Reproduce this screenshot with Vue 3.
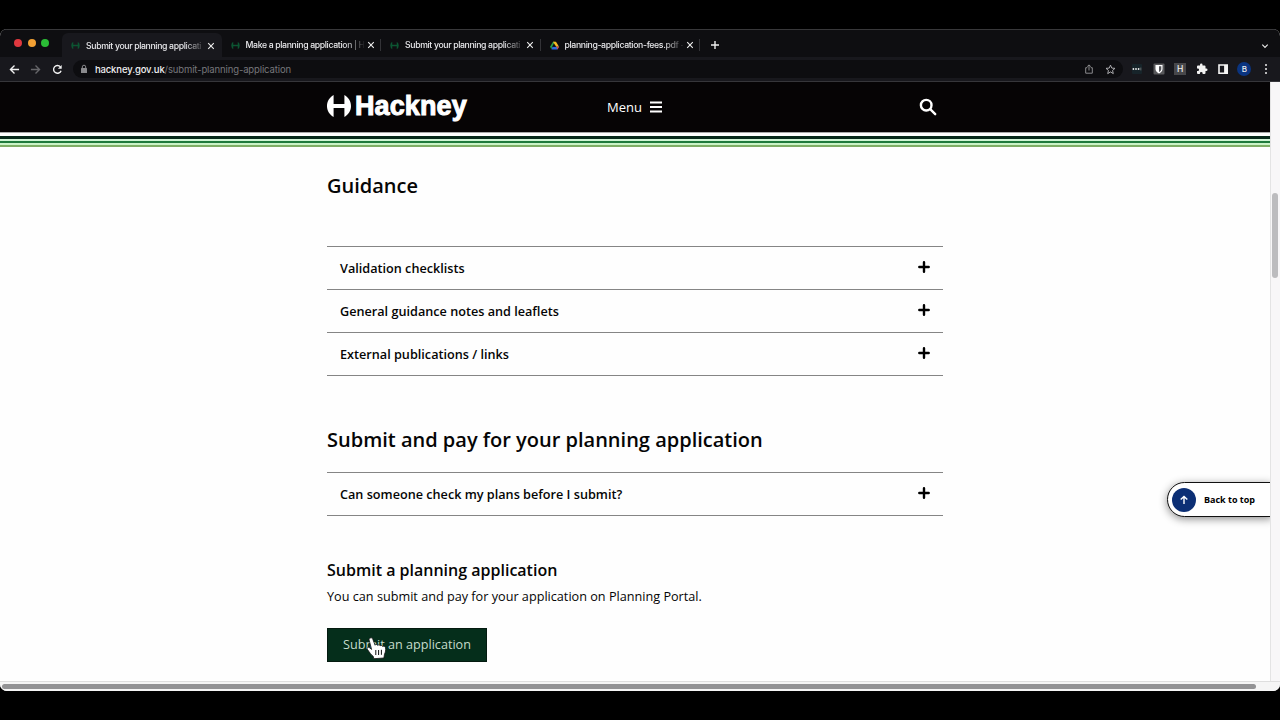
<script setup>
const tabs = [
  { title: "Submit your planning applicati", icon: "hackney", active: true },
  { title: "Make a planning application | H", icon: "hackney" },
  { title: "Submit your planning applicati", icon: "hackney" },
  { title: "planning-application-fees.pdf -", icon: "drive" },
];

const guidance = [
  "Validation checklists",
  "General guidance notes and leaflets",
  "External publications / links",
];

const submit = ["Can someone check my plans before I submit?"];
</script>

<template>
  <div class="desktop">
    <div class="window">
      <div class="tabbar">
        <div class="lights">
          <i class="red"></i>
          <i class="amber"></i>
          <i class="green"></i>
        </div>
        <div v-for="(tab, i) in tabs" :key="i" class="tab" :class="{ active: tab.active }">
          <svg v-if="tab.icon === 'hackney'" class="favicon" viewBox="0 0 24 24">
            <path fill="#0c5532" d="M6 2v8h12V2a12 12 0 0 1 0 20v-8H6v8A12 12 0 0 1 6 2z" />
          </svg>
          <svg v-else class="favicon drive" viewBox="0 0 24 22">
            <path fill="#2a9d4b" d="M8 1h5L5.500 14 4 21 0 14.500z" />
            <path fill="#f5b923" d="M8 1h8l8 13.500h-8z" />
            <path fill="#2c6be0" d="M6.500 14.500H24L20 21.500H4z" />
            <path fill="#e5483a" d="M17 14.500h7L20 21.500z" />
            <path fill="#0e0e11" d="M12 8l4 6.500H8z" />
          </svg>
          <span class="title">{{ tab.title }}</span>
          <svg class="close" viewBox="0 0 8 8"><path d="M1.200 1.200l5.600 5.600M6.800 1.200L1.200 6.800" /></svg>
        </div>
        <svg class="newtab" viewBox="0 0 10 10"><path d="M5 1v8M1 5h8" /></svg>
        <svg class="chevron" viewBox="0 0 8 8"><path d="M1.300 2.700L4 5.400l2.700-2.700" /></svg>
      </div>

      <div class="toolbar">
        <svg class="nav" viewBox="0 0 12 12"><path d="M11 6H1.800M6 1.600L1.600 6 6 10.400" /></svg>
        <svg class="nav dim" viewBox="0 0 12 12"><path d="M1 6h9.200M6 1.600L10.400 6 6 10.400" /></svg>
        <svg class="nav" viewBox="0 0 12 12">
          <path d="M9.900 7.300A4.200 4.200 0 1 1 9.200 3.200" />
          <path class="solid" d="M10.600 1v4.200H6.400z" />
        </svg>
        <div class="omnibox">
          <svg class="lock" viewBox="0 0 8 10">
            <rect x="1" y="4" width="6" height="5" rx=".6" fill="#8a8a8d" />
            <path d="M2.300 4.200V2.900a1.700 1.700 0 0 1 3.400 0v1.300" fill="none" stroke="#8a8a8d" />
          </svg>
          <span class="url"><b>hackney.gov.uk</b>/submit-planning-application</span>
          <svg class="share" viewBox="0 0 10 10"><path d="M3.300 3.700H1.700v5.500h6.600V3.700H6.700M5 6.500V1M3.200 2.600L5 .9l1.800 1.700" /></svg>
          <svg class="star" viewBox="0 0 24 24"><path d="M12 2.500l2.800 6.400 7 .6-5.300 4.600 1.600 6.900-6.100-3.700L5.900 21l1.600-6.900-5.300-4.600 7-.6z" /></svg>
        </div>
        <div class="extensions">
          <svg viewBox="0 0 12 12">
            <rect x="1" y="1" width="10" height="10" rx="1" fill="#17242a" />
            <circle cx="2.400" cy="6" r=".9" fill="#eee" /><circle cx="5" cy="6" r=".9" fill="#eee" />
            <circle cx="7.600" cy="6" r=".9" fill="#eee" /><path d="M9.800 4.600v2.800" stroke="#888" stroke-width=".7" />
          </svg>
          <svg viewBox="0 0 12 12">
            <rect x=".5" y=".5" width="11" height="11" rx="1" fill="#58585b" />
            <path d="M2.500 2h7v4c0 2.300-1.800 3.600-3.500 4.400C4.300 9.600 2.500 8.300 2.500 6z" fill="#fff" />
            <path d="M6 3.200h2.300V6c0 1.300-1 2.200-2.300 3z" fill="#55555a" />
          </svg>
          <span class="letter">H</span>
          <svg viewBox="0 0 24 24">
            <path fill="#f2f2f2" d="M20.500 11H19V7a2 2 0 0 0-2-2h-4V3.500a2.500 2.500 0 0 0-5 0V5H4a2 2 0 0 0-2 2v3.800h1.500a2.700 2.700 0 0 1 0 5.400H2V20a2 2 0 0 0 2 2h3.800v-1.500a2.700 2.700 0 0 1 5.400 0V22H17a2 2 0 0 0 2-2v-4h1.500a2.500 2.500 0 0 0 0-5z" />
          </svg>
          <svg viewBox="0 0 12 12">
            <path fill="#f5f5f5" fill-rule="evenodd" d="M1.200 1.200h9.800v9.800H1.200zM2.800 2.800v6.600h4.300V2.800z" />
          </svg>
          <span class="avatar">B</span>
          <svg class="kebab" viewBox="0 0 12 12"><circle cx="6" cy="2" r="1" /><circle cx="6" cy="6" r="1" /><circle cx="6" cy="10" r="1" /></svg>
        </div>
      </div>

      <div class="viewport">
        <div class="page">
          <header class="header">
            <div class="inner">
              <div class="logo">
                <svg viewBox="0 0 24 22">
                  <path fill="#fff" d="M6.600 0V9H17.400V0C21.800 2.500 24 6.500 24 11s-2.200 8.500-6.600 11V13H6.600v9C2.200 19.500 0 15.500 0 11S2.200 2.500 6.600 0z" />
                </svg>
                <span>Hackney</span>
              </div>
              <div class="menu">
                <span>Menu</span>
                <svg viewBox="0 0 12 12"><path d="M0 1.500h12M0 6h12M0 10.500h12" /></svg>
              </div>
              <svg class="search" viewBox="0 0 18 18">
                <circle cx="7.200" cy="7.200" r="5.300" />
                <path d="M11.200 11.200l5 5" />
              </svg>
            </div>
          </header>
          <div class="stripes"><i></i><i></i><i></i></div>

          <main class="content">
            <h2 class="guidance">Guidance</h2>
            <ul class="accordion">
              <li v-for="item in guidance" :key="item">
                <span>{{ item }}</span>
                <svg viewBox="0 0 12 12"><path d="M6 1.300v9.400M1.300 6h9.400" /></svg>
              </li>
            </ul>
            <h2 class="pay">Submit and pay for your planning application</h2>
            <ul class="accordion">
              <li v-for="item in submit" :key="item">
                <span>{{ item }}</span>
                <svg viewBox="0 0 12 12"><path d="M6 1.300v9.400M1.300 6h9.400" /></svg>
              </li>
            </ul>
            <h3>Submit a planning application</h3>
            <p>You can submit and pay for your application on Planning Portal.</p>
            <a class="button">Submit an application</a>
          </main>

          <div class="totop">
            <span class="disc">
              <svg viewBox="0 0 10 10"><path d="M5 9V1.600M1.700 4.600L5 1.400l3.300 3.200" /></svg>
            </span>
            <span>Back to top</span>
          </div>
        </div>
        <div class="vscroll"><div class="thumb"></div></div>
      </div>
      <div class="hscroll"><div class="thumb"></div></div>
    </div>

    <svg class="cursor" viewBox="0 0 20 22">
      <path
        fill="#fff"
        stroke="#111"
        stroke-width=".8"
        d="M4.400 1c1.200-.5 2 .2 2.400 1.200l2.300 6c.3-1 2.200-1 2.600.2.600-.9 2.200-.7 2.500.4.700-.7 2-.4 2.300.6 1.200-.4 2.800.1 3 1.300.4 2.300 0 4.500-1 6.500l-.6 3.800-10 .7-.7-2.400c-2-1.300-3.300-3.500-5.700-6.800-1.200-1.800.8-2.800 2.100-1.700l2 1.600L3.200 3.200C2.800 2.200 3.300 1.300 4.400 1z"
      />
      <path d="M9.800 13v5M12.600 13v5M15.400 12.800v5" stroke="#111" stroke-width="1" fill="none" />
    </svg>
  </div>
</template>

<style>
body {
  margin: 0;
  background: #000;
}
</style>

<style scoped>
.desktop {
  position: relative;
  box-sizing: border-box;
  width: 1280px;
  height: 720px;
  padding: 29px 0;
  overflow: hidden;
  background: #000;
  font-family: "Open Sans", sans-serif;
}

svg {
  flex: none;
  display: block;
}

.window {
  display: flex;
  flex-direction: column;
  height: 662px;
  overflow: hidden;
  border-radius: 7px;
  background: #fff;
}

.tabbar {
  display: flex;
  box-sizing: border-box;
  height: 28px;
  border-top: 1px solid #38383a;
  background: #0e0e11;
  font: 500 8.700px Inter, sans-serif;
  letter-spacing: -0.350px;
  color: #e9e9ec;
}

.lights {
  display: flex;
  gap: 5.500px;
  width: 48px;
  padding: 9px 0 0 14px;
}

.lights i {
  width: 8px;
  height: 8px;
  border-radius: 50%;
}

.red {
  background: #e0383e;
}

.amber {
  background: #f2a033;
}

.green {
  background: #2bbd36;
}

.tab {
  display: flex;
  align-items: center;
  box-sizing: border-box;
  width: 159.500px;
  height: 24px;
  margin-top: 3px;
  padding: 0 6.500px 0 9px;
}

.tab.active {
  height: 25px;
  border-radius: 6px 6px 0 0;
  background: #18181d;
}

.tab:not(.active) {
  background: linear-gradient(#333337, #333337) no-repeat right 6px / 1px 12px;
}

.favicon {
  width: 9px;
  height: 9px;
}

.title {
  flex: 1;
  min-width: 0;
  margin-left: 6px;
  white-space: nowrap;
  mask-image: linear-gradient(90deg, #000 98px, transparent 120px);
}

.close {
  width: 8px;
  height: 8px;
  margin-left: 3px;
}

.close path,
.newtab path,
.chevron path {
  fill: none;
  stroke: #eee;
  stroke-width: 1.100;
}

.newtab {
  width: 10px;
  height: 10px;
  margin: 10px 0 0 9.500px;
}

.newtab path {
  stroke-width: 1.400;
}

.chevron {
  width: 8px;
  height: 8px;
  margin: 12px 11px 0 auto;
}

.toolbar {
  display: flex;
  align-items: center;
  box-sizing: border-box;
  height: 25px;
  padding-left: 9px;
  border-bottom: 1px solid #36363a;
  background: #18181d;
}

.nav {
  width: 11px;
  height: 11px;
  margin-right: 10.300px;
}

.nav path {
  fill: none;
  stroke: #f2f2f2;
  stroke-width: 1.500;
}

.nav .solid {
  fill: #f2f2f2;
  stroke: none;
}

.nav.dim path {
  stroke: #66666a;
}

.omnibox {
  display: flex;
  align-items: center;
  width: 1050px;
  height: 18px;
  border-radius: 9px;
  background: #0d0d10;
}

.lock {
  width: 8px;
  height: 10px;
  margin-left: 7px;
}

.url {
  flex: 1;
  margin-left: 7px;
  font: 9.500px Inter, sans-serif;
  letter-spacing: -0.120px;
  color: #77777b;
}

.url b {
  font-weight: 500;
  color: #f0f0f2;
}

.share {
  width: 10px;
  height: 10px;
  margin-right: 11px;
}

.star {
  width: 11px;
  height: 11px;
  margin-right: 7px;
}

.share path {
  fill: none;
  stroke: #98989b;
  stroke-width: 0.900;
}

.star path {
  fill: none;
  stroke: #b8b8bb;
  stroke-width: 2;
}

.extensions {
  display: flex;
  align-items: center;
  gap: 9.400px;
  padding-left: 8.500px;
}

.extensions svg {
  width: 12px;
  height: 12px;
}

.letter,
.avatar {
  width: 12px;
  height: 12px;
  font: 500 8.500px/12px Inter, sans-serif;
  text-align: center;
  color: #eee;
  background: #47474a;
}

.avatar {
  width: 14px;
  height: 14px;
  margin: 0 -1px;
  border-radius: 50%;
  background: #0a3480;
  font-size: 8px;
  line-height: 14px;
}

.kebab circle {
  fill: #eee;
}

.viewport {
  display: flex;
  flex: 1;
  min-height: 0;
}

.page {
  position: relative;
  width: 1270px;
  overflow: hidden;
  background: #fefefe;
}

.header {
  height: 50px;
  background: #060405;
}

.inner {
  display: flex;
  align-items: center;
  width: 616px;
  height: 50px;
  margin: 0 auto;
  color: #fff;
}

.logo {
  display: flex;
  align-items: center;
  width: 280px;
  padding-bottom: 3px;
}

.logo svg {
  width: 24px;
  height: 22px;
}

.logo span {
  margin-left: 4px;
  font: bold 27px/30px "Liberation Sans", sans-serif;
  letter-spacing: 0.100px;
  -webkit-text-stroke: 1px #fff;
}

.menu {
  display: flex;
  align-items: center;
  gap: 8px;
  font-size: 13px;
}

.menu svg {
  width: 12px;
  height: 12px;
}

.menu path {
  stroke: #fff;
  stroke-width: 1.900;
}

.search {
  width: 18px;
  height: 18px;
  margin: 0 6px 0 auto;
  fill: none;
  stroke: #fff;
  stroke-width: 2.400;
  stroke-linecap: round;
}

.stripes {
  display: flex;
  flex-direction: column;
  gap: 2px;
  box-sizing: border-box;
  height: 14px;
  padding-top: 3px;
  border-top: 1px solid #aaa;
  background: linear-gradient(#fff 5px, #d5f5dd 5px, #c9f3c4 12px, #fefefe 13px);
}

.stripes i {
  flex: none;
  height: 3px;
  background: #06291a;
}

.stripes i:nth-child(2) {
  height: 2px;
  background: #1f7a3c;
}

.stripes i:nth-child(3) {
  height: 1.500px;
  background: #7fae66;
}

.content {
  width: 616px;
  margin: 0 auto;
  color: #050505;
}

h2,
h3,
p,
ul {
  margin: 0;
  padding: 0;
}

h2 {
  font-weight: 600;
  font-size: 20px;
  line-height: 28px;
}

.guidance {
  padding: 26px 0 46px;
}

.pay {
  padding: 50px 0 18px;
}

.accordion {
  border-top: 1px solid #858585;
  list-style: none;
}

.accordion li {
  display: flex;
  align-items: center;
  justify-content: space-between;
  box-sizing: border-box;
  height: 43px;
  padding: 0 13px;
  border-bottom: 1px solid #858585;
  font-weight: 600;
  font-size: 12.670px;
}

.accordion svg {
  width: 12px;
  height: 12px;
  margin-bottom: 2px;
}

.accordion path {
  stroke: #000;
  stroke-width: 2.400;
  stroke-linecap: round;
}

h3 {
  padding-top: 42px;
  font-weight: 600;
  font-size: 16px;
  line-height: 24px;
}

p {
  padding-top: 4px;
  font-size: 12.670px;
  line-height: 20px;
}

.button {
  display: block;
  box-sizing: border-box;
  width: 160px;
  height: 34px;
  margin-top: 22px;
  border: 1px solid #041a10;
  background: #052e1b;
  font-size: 12.620px;
  line-height: 32px;
  text-align: center;
  color: #c5dccb;
}

.totop {
  position: absolute;
  top: 400px;
  right: -2px;
  display: flex;
  align-items: center;
  gap: 8px;
  box-sizing: border-box;
  width: 105px;
  height: 35px;
  padding-left: 4px;
  border: 1.500px solid #111;
  border-radius: 18px 0 0 18px;
  background: #fff;
  box-shadow: 0 2px 8px rgba(0, 0, 0, 0.45);
  font-weight: 700;
  font-size: 9px;
  color: #000;
}

.disc {
  display: grid;
  place-items: center;
  width: 24px;
  height: 24px;
  border-radius: 50%;
  background: #0c2f75;
}

.disc svg {
  width: 10px;
  height: 10px;
}

.disc path {
  fill: none;
  stroke: #fff;
  stroke-width: 1.400;
}

.vscroll {
  box-sizing: border-box;
  width: 10px;
  padding: 111px 2px 0 1px;
  border-left: 1px solid #e4e4e4;
  background: #f8f7f8;
}

.vscroll .thumb {
  height: 85px;
  border-radius: 4px;
  background: #bcbcbe;
}

.hscroll {
  box-sizing: border-box;
  height: 10px;
  padding: 2px 0 0 2px;
  border-top: 1px solid #dedede;
  background: #f5f5f5;
}

.hscroll .thumb {
  width: 1254px;
  height: 5px;
  border-radius: 3px;
  background: #929294;
}

/* pointer resting on the submit button */
.cursor {
  position: absolute;
  left: 366px;
  top: 637px;
  width: 20px;
  height: 22px;
}
</style>
